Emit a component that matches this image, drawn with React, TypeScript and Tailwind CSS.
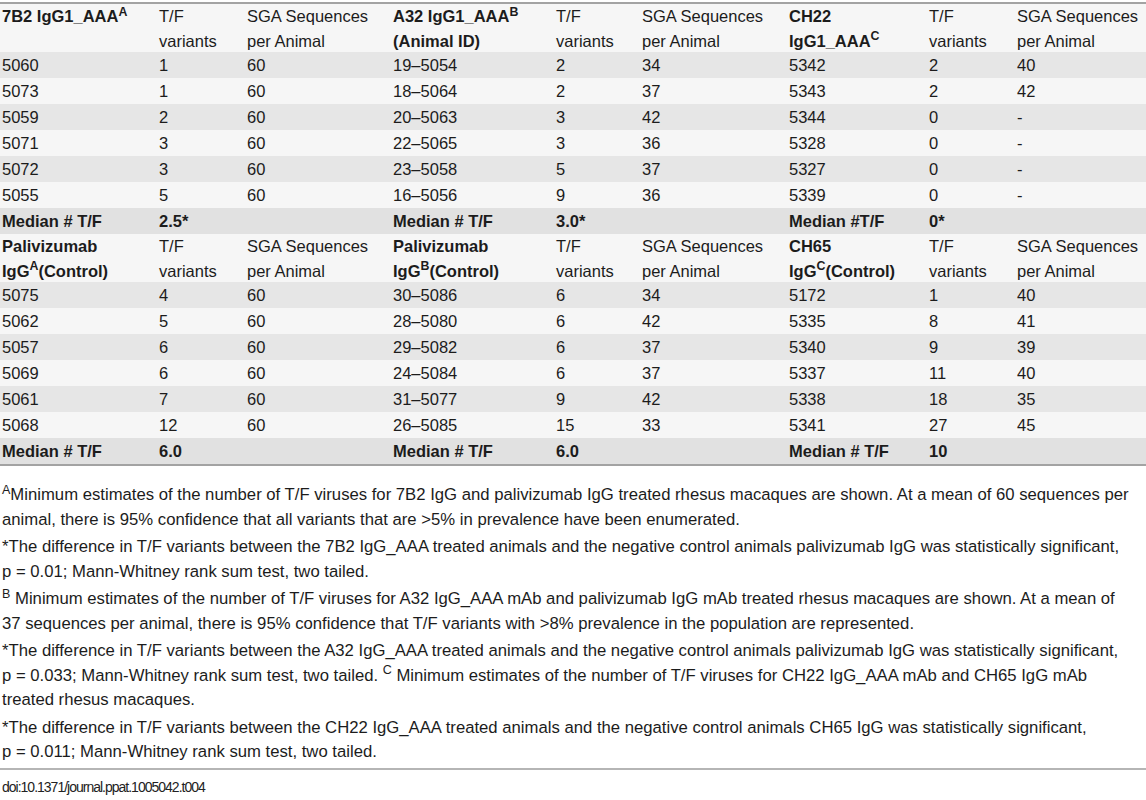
const cols = "grid grid-cols-[157px_88px_146px_163px_86px_147px_140px_88px_131px]";

type Block = {
  head: [React.ReactNode, React.ReactNode, React.ReactNode];
  rows: string[][];
  median: [string, string, string];
  labels: [string, string, string];
};

const top: Block = {
  head: [
    <>7B2 IgG1_AAA<sup>A</sup></>,
    <>A32 IgG1_AAA<sup>B</sup><br />(Animal ID)</>,
    <>CH22<br />IgG1_AAA<sup>C</sup></>,
  ],
  rows: [
    ["5060", "1", "60", "19–5054", "2", "34", "5342", "2", "40"],
    ["5073", "1", "60", "18–5064", "2", "37", "5343", "2", "42"],
    ["5059", "2", "60", "20–5063", "3", "42", "5344", "0", "-"],
    ["5071", "3", "60", "22–5065", "3", "36", "5328", "0", "-"],
    ["5072", "3", "60", "23–5058", "5", "37", "5327", "0", "-"],
    ["5055", "5", "60", "16–5056", "9", "36", "5339", "0", "-"],
  ],
  median: ["2.5*", "3.0*", "0*"],
  labels: ["Median # T/F", "Median # T/F", "Median #T/F"],
};

const bottom: Block = {
  head: [
    <>Palivizumab<br />IgG<sup>A</sup>(Control)</>,
    <>Palivizumab<br />IgG<sup>B</sup>(Control)</>,
    <>CH65<br />IgG<sup>C</sup>(Control)</>,
  ],
  rows: [
    ["5075", "4", "60", "30–5086", "6", "34", "5172", "1", "40"],
    ["5062", "5", "60", "28–5080", "6", "42", "5335", "8", "41"],
    ["5057", "6", "60", "29–5082", "6", "37", "5340", "9", "39"],
    ["5069", "6", "60", "24–5084", "6", "37", "5337", "11", "40"],
    ["5061", "7", "60", "31–5077", "9", "42", "5338", "18", "35"],
    ["5068", "12", "60", "26–5085", "15", "33", "5341", "27", "45"],
  ],
  median: ["6.0", "6.0", "10"],
  labels: ["Median # T/F", "Median # T/F", "Median # T/F"],
};

function HeaderRow({ head }: { head: Block["head"] }) {
  return (
    <div className={`${cols} h-[48px] bg-[#f6f6f6] leading-[24.5px]`}>
      {head.flatMap((h, i) => [
        <div key={`h${i}`} className="pl-[2px] font-bold">{h}</div>,
        <div key={`t${i}`} className="pl-[2px]">T/F<br />variants</div>,
        <div key={`s${i}`} className="pl-[2px]">SGA Sequences<br />per Animal</div>,
      ])}
    </div>
  );
}

function Section({ block }: { block: Block }) {
  return (
    <>
      <HeaderRow head={block.head} />
      {block.rows.map((r, i) => (
        <div key={i} className={`${cols} h-[26px] items-center ${i % 2 === 0 ? "bg-[#e6e6e6]" : "bg-[#f6f6f6]"}`}>
          {r.map((c, j) => (
            <div key={j} className="pl-[2px]">{c}</div>
          ))}
        </div>
      ))}
      <div className={`${cols} h-[26px] items-center bg-[#e1e1e1] font-bold`}>
        {block.median.flatMap((m, i) => [
          <div key={`l${i}`} className="pl-[2px]">{block.labels[i]}</div>,
          <div key={`m${i}`} className="pl-[2px]">{m}</div>,
          <div key={`e${i}`} />,
        ])}
      </div>
    </>
  );
}

export default function App() {
  return (
    <div className="w-[1146px] h-[800px] bg-white text-[#1c1c1c] font-['Liberation_Sans',Arial,sans-serif] overflow-hidden">
      <div className="mt-[2px] border-t-2 border-b-2 border-[#a3a3a3] text-[16.5px]">
        <Section block={top} />
        <Section block={bottom} />
      </div>

      {/* footnotes */}
      <div className="mt-[17px] text-[16.7px] leading-[24.5px] pl-[2px] whitespace-nowrap">
        <p className="mb-[3px]">
          <sup>A</sup>Minimum estimates of the number of T/F viruses for 7B2 IgG and palivizumab IgG treated rhesus macaques are shown. At a mean of 60 sequences per
          <br />animal, there is 95% confidence that all variants that are &gt;5% in prevalence have been enumerated.
        </p>
        <p className="mb-[3px]">
          *The difference in T/F variants between the 7B2 IgG_AAA treated animals and the negative control animals palivizumab IgG was statistically significant,
          <br />p = 0.01; Mann-Whitney rank sum test, two tailed.
        </p>
        <p className="mb-[3px]">
          <sup>B</sup> Minimum estimates of the number of T/F viruses for A32 IgG_AAA mAb and palivizumab IgG mAb treated rhesus macaques are shown. At a mean of
          <br />37 sequences per animal, there is 95% confidence that T/F variants with &gt;8% prevalence in the population are represented.
        </p>
        <p className="mb-[3px]">
          *The difference in T/F variants between the A32 IgG_AAA treated animals and the negative control animals palivizumab IgG was statistically significant,
          <br />p = 0.033; Mann-Whitney rank sum test, two tailed. <sup>C</sup> Minimum estimates of the number of T/F viruses for CH22 IgG_AAA mAb and CH65 IgG mAb
          <br />treated rhesus macaques.
        </p>
        <p>
          *The difference in T/F variants between the CH22 IgG_AAA treated animals and the negative control animals CH65 IgG was statistically significant,
          <br />p = 0.011; Mann-Whitney rank sum test, two tailed.
        </p>
      </div>

      <div className="mt-[3px] border-t-2 border-[#b5b5b5] pt-[9px] pl-[2px] text-[14px] leading-[16px] tracking-[-1px] text-[#222]">
        doi:10.1371/journal.ppat.1005042.t004
      </div>
    </div>
  );
}
